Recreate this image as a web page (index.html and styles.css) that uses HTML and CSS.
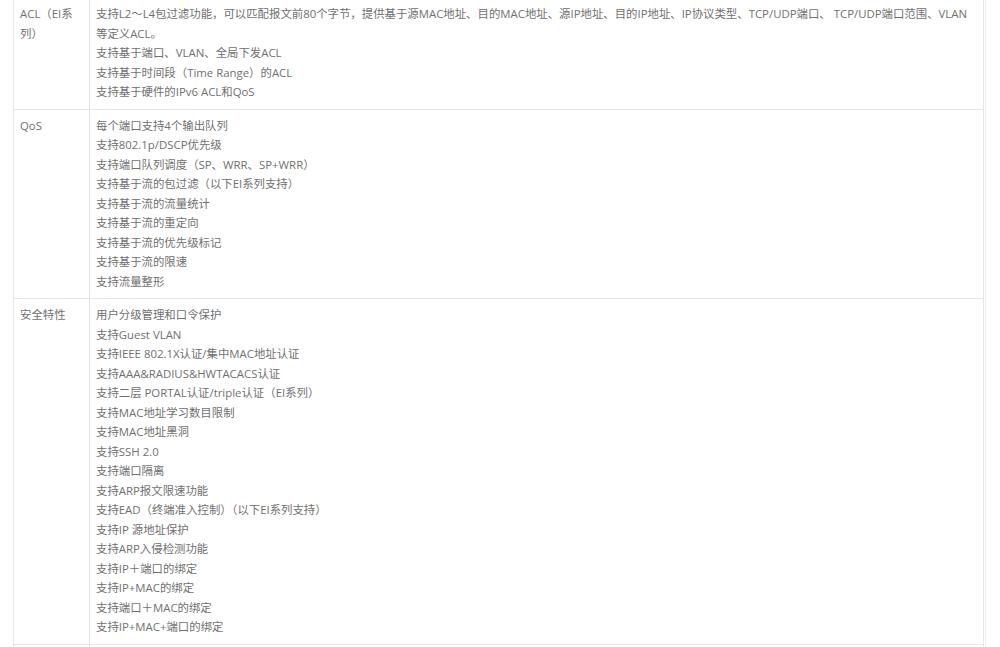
FILE: index.html
```html
<!DOCTYPE html>
<html lang="zh-CN">
<head>
    <meta charset="UTF-8">
    <meta name="viewport" content="width=device-width, initial-scale=1.0">
    <title>产品规格</title>
    <link rel="stylesheet" href="styles.css">
</head>
<body>
    <div class="spec">
        <table class="spec-table">
            <tr>
                <td class="name">ACL（EI系列）</td>
                <td class="value">
                    <p>支持L2～L4包过滤功能，可以匹配报文前80个字节，提供基于源MAC地址、目的MAC地址、源IP地址、目的IP地址、IP协议类型、TCP/UDP端口、 TCP/UDP端口范围、VLAN等定义ACL。</p>
                    <p>支持基于端口、VLAN、全局下发ACL</p>
                    <p>支持基于时间段（Time Range）的ACL</p>
                    <p>支持基于硬件的IPv6 ACL和QoS</p>
                </td>
            </tr>
            <tr>
                <td class="name">QoS</td>
                <td class="value">
                    <p>每个端口支持4个输出队列</p>
                    <p>支持802.1p/DSCP优先级</p>
                    <p>支持端口队列调度（SP、WRR、SP+WRR）</p>
                    <p>支持基于流的包过滤（以下EI系列支持）</p>
                    <p>支持基于流的流量统计</p>
                    <p>支持基于流的重定向</p>
                    <p>支持基于流的优先级标记</p>
                    <p>支持基于流的限速</p>
                    <p>支持流量整形</p>
                </td>
            </tr>
            <tr>
                <td class="name">安全特性</td>
                <td class="value">
                    <p>用户分级管理和口令保护</p>
                    <p>支持Guest VLAN</p>
                    <p>支持IEEE 802.1X认证/集中MAC地址认证</p>
                    <p>支持AAA&amp;RADIUS&amp;HWTACACS认证</p>
                    <p>支持二层 PORTAL认证/triple认证（EI系列）</p>
                    <p>支持MAC地址学习数目限制</p>
                    <p>支持MAC地址黑洞</p>
                    <p>支持SSH 2.0</p>
                    <p>支持端口隔离</p>
                    <p>支持ARP报文限速功能</p>
                    <p>支持EAD（终端准入控制）（以下EI系列支持）</p>
                    <p>支持IP 源地址保护</p>
                    <p>支持ARP入侵检测功能</p>
                    <p>支持IP＋端口的绑定</p>
                    <p>支持IP+MAC的绑定</p>
                    <p>支持端口＋MAC的绑定</p>
                    <p>支持IP+MAC+端口的绑定</p>
                </td>
            </tr>
            <tr>
                <td class="name">&nbsp;</td>
                <td class="value"><p>&nbsp;</p></td>
            </tr>
        </table>
    </div>
</body>
</html>
```

FILE: styles.css
```css
body {
    margin: 0;
    background: #fff;
    font-family: "Open Sans", "Noto Sans CJK SC", sans-serif;
    font-size: 11.4px;
    color: #707070;
}
.spec {
    margin: -3px 0 0 13px;
    width: 972px;
    border-right: 1px solid #f0f0f0;
}
.spec-table {
    width: 971px;
    border-collapse: collapse;
    table-layout: fixed;
}
.spec-table td {
    border: 1px solid #e6e6e6;
    vertical-align: top;
    line-height: 19.5px;
}
.name {
    width: 63px;
    padding: 6px 6px 8px 6px;
}
.value {
    padding: 6px 6px 7px 6px;
}
.value p {
    margin: 0;
}
```
